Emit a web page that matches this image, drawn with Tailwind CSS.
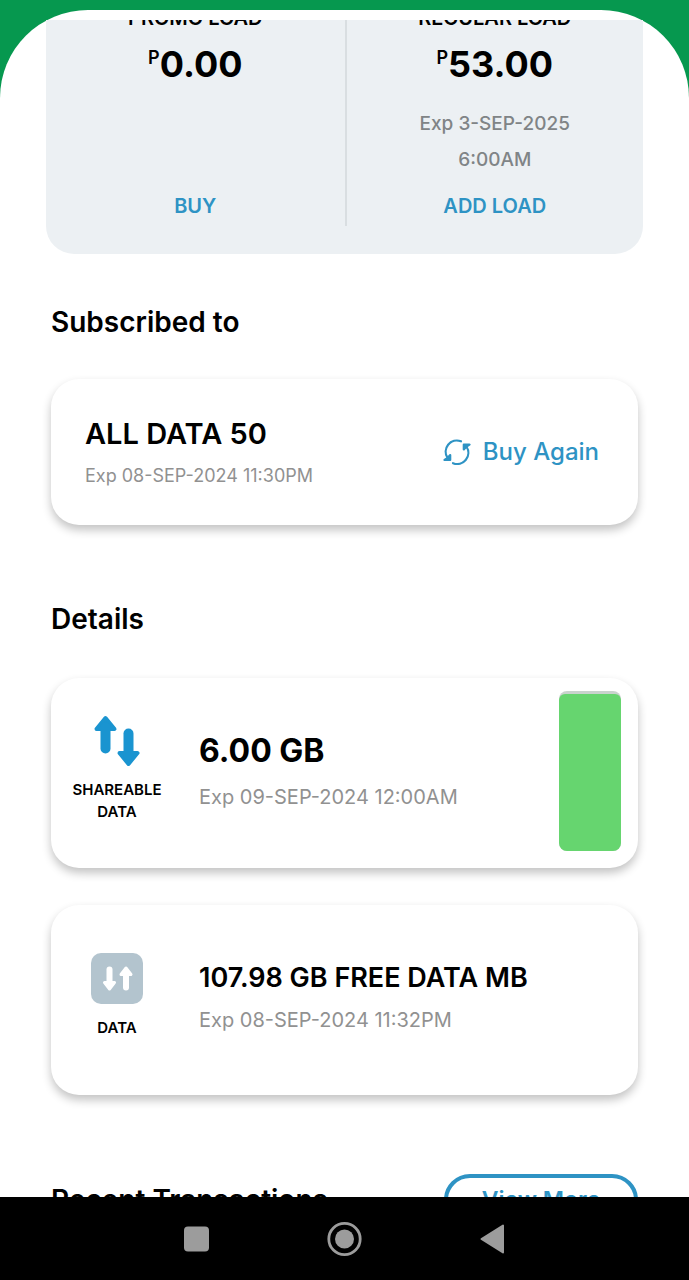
<!DOCTYPE html>
<html lang="en">
<head>
    <meta charset="UTF-8">
    <meta name="viewport" content="width=device-width, initial-scale=1.0">
    <title>Load and Data Balance</title>
    <script src="https://cdn.jsdelivr.net/npm/@tailwindcss/browser@4"></script>
</head>
<body class="flex h-screen flex-col bg-black font-['Inter',sans-serif] text-black">

    <!-- App screen -->
    <main class="flex min-h-0 flex-1 flex-col bg-[#06984f] pt-[10px]">
        <div class="flex min-h-0 flex-1 flex-col rounded-t-[88px] bg-white pt-[10px]">
            <!-- Scrolled content -->
            <div class="min-h-0 flex-1 overflow-hidden">

                <!-- Balances -->
                <section class="mx-[46px] -mt-10 grid grid-cols-2 rounded-[28px] bg-[#ecf0f3] pt-[26px] pb-7 text-center">
                    <div class="flex flex-col items-center pb-2">
                        <h2 class="text-xl leading-6 font-semibold">PROMO LOAD</h2>
                        <p class="mt-[10px] flex items-start text-4xl leading-12 font-bold"><span class="text-lg leading-9 font-semibold">P</span>0.00</p>
                        <a href="#" class="mt-auto text-xl leading-6 font-semibold text-[#2e93c4]">BUY</a>
                    </div>
                    <div class="flex flex-col items-center border-l-2 border-[#d9dee1] pb-2">
                        <h2 class="text-xl leading-6 font-semibold">REGULAR LOAD</h2>
                        <p class="mt-[10px] flex items-start text-4xl leading-12 font-bold"><span class="text-lg leading-9 font-semibold">P</span>53.00</p>
                        <p class="mt-[18px] text-[19px] leading-9 font-medium text-[#808486]">Exp 3-SEP-2025<br>6:00AM</p>
                        <a href="#" class="mt-4 text-xl leading-6 font-semibold text-[#2e93c4]">ADD LOAD</a>
                    </div>
                </section>

                <!-- Subscription -->
                <section class="mx-[51px] mt-12">
                    <h2 class="text-[28px] leading-10 font-semibold">Subscribed to</h2>
                    <div class="mt-[37px] flex h-[146px] items-center justify-between rounded-[28px] bg-white pr-[39px] pb-px pl-[34px] shadow-[0_5px_10px_rgba(0,0,0,0.24)]">
                        <div>
                            <h3 class="text-[29px] leading-10 font-semibold">ALL DATA 50</h3>
                            <p class="mt-2 text-lg leading-7 text-[#919191]">Exp 08-SEP-2024 11:30PM</p>
                        </div>
                        <button type="button" class="flex items-center gap-3 text-2xl leading-8 font-medium text-[#2e93c4]">
                            <svg class="h-7 w-7" viewBox="0 0 28 28" fill="none" stroke="currentColor" stroke-width="2.2" stroke-linecap="round" stroke-linejoin="round">
                                <path d="M18 3.300A11.200 11.200 0 0 0 4.600 20"/>
                                <path d="M10 25.200A11.200 11.200 0 0 0 23.400 8.500"/>
                                <path d="M1.500 22H7.200V17L4.600 20Z" fill="currentColor"/>
                                <path d="M26.500 6.500H20.800V11.500L23.400 8.500Z" fill="currentColor"/>
                            </svg>
                            Buy Again
                        </button>
                    </div>
                </section>

                <!-- Details -->
                <section class="mx-[51px] mt-[74px]">
                    <h2 class="text-[28px] leading-10 font-semibold">Details</h2>

                    <div class="mt-[39px] flex h-[190px] items-center rounded-[28px] bg-white pr-[17px] pb-1 shadow-[0_5px_10px_rgba(0,0,0,0.24)]">
                        <div class="flex w-[132px] shrink-0 flex-col items-center pb-1">
                            <svg class="h-13 w-12" viewBox="0 0 48 52" fill="#1a94d0" stroke="#1a94d0" stroke-linejoin="round" stroke-linecap="round">
                                <path d="M12.500 3L21.500 14H3.500Z" stroke-width="4"/>
                                <path d="M12.500 12V33.500" stroke-width="10"/>
                                <path d="M35.500 49L44.500 38H26.500Z" stroke-width="4"/>
                                <path d="M35.500 40V18.500" stroke-width="10"/>
                            </svg>
                            <p class="mt-3 text-center text-[15px] leading-[22px] font-semibold">SHAREABLE<br>DATA</p>
                        </div>
                        <div class="ml-4 flex-1">
                            <h3 class="text-[32px] leading-10 font-bold">6.00 GB</h3>
                            <p class="mt-3 text-xl leading-7 text-[#919191]">Exp 09-SEP-2024 12:00AM</p>
                        </div>
                        <div role="meter" aria-label="Data left" aria-valuemin="0" aria-valuemax="100" aria-valuenow="98" class="flex h-40 w-[62px] flex-col justify-end overflow-hidden rounded-lg bg-[#c9d3cd]">
                            <div class="rounded-t-md bg-[#66d56f]" style="height: 98%"></div>
                        </div>
                    </div>

                    <div class="mt-[37px] flex h-[190px] items-center rounded-[28px] bg-white pb-2 shadow-[0_5px_10px_rgba(0,0,0,0.24)]">
                        <div class="flex w-[132px] shrink-0 flex-col items-center">
                            <svg class="h-13 w-13" viewBox="0 0 52 52" stroke-linejoin="round" stroke-linecap="round">
                                <rect width="52" height="51" rx="10" fill="#b3c4ce"/>
                                <g fill="#fff" stroke="#fff">
                                    <path d="M18.500 36L23.500 29.500H13.500Z" stroke-width="3"/>
                                    <path d="M18.500 30V16.500" stroke-width="6"/>
                                    <path d="M35 15L40 21.500H30Z" stroke-width="3"/>
                                    <path d="M35 21V34.500" stroke-width="6"/>
                                </g>
                            </svg>
                            <p class="mt-3 text-center text-[15px] leading-[22px] font-semibold">DATA</p>
                        </div>
                        <div class="ml-4 flex-1">
                            <h3 class="text-[27px] leading-10 font-semibold">107.98 GB FREE DATA MB</h3>
                            <p class="mt-2 text-xl leading-7 text-[#919191]">Exp 08-SEP-2024 11:32PM</p>
                        </div>
                    </div>
                </section>

                <!-- Transactions -->
                <section class="mx-[51px] mt-[79px] flex items-center justify-between">
                    <h2 class="text-[28px] leading-10 font-semibold">Recent Transactions</h2>
                    <button type="button" class="h-13 w-[194px] rounded-full border-4 border-[#2e93c4] text-[23px] leading-8 font-semibold text-[#2e93c4]">View More</button>
                </section>
            </div>
        </div>
    </main>

    <!-- System navigation -->
    <nav class="flex h-[83px] shrink-0 items-center justify-center gap-28 bg-black text-[#9c9c9c]">
        <button type="button" aria-label="Recent apps">
            <svg class="h-9 w-9" viewBox="0 0 36 36" fill="currentColor"><rect x="5" y="5.500" width="25" height="25" rx="4"/></svg>
        </button>
        <button type="button" aria-label="Home">
            <svg class="h-9 w-9" viewBox="0 0 36 36"><circle cx="17.500" cy="18" r="15.700" fill="none" stroke="currentColor" stroke-width="2.800"/><circle cx="17.500" cy="18" r="9.500" fill="currentColor"/></svg>
        </button>
        <button type="button" aria-label="Back">
            <svg class="h-9 w-9" viewBox="0 0 36 36" fill="currentColor" stroke="currentColor" stroke-width="2" stroke-linejoin="round"><path d="M6.500 18L28 4.500V31.500Z"/></svg>
        </button>
    </nav>

</body>
</html>
